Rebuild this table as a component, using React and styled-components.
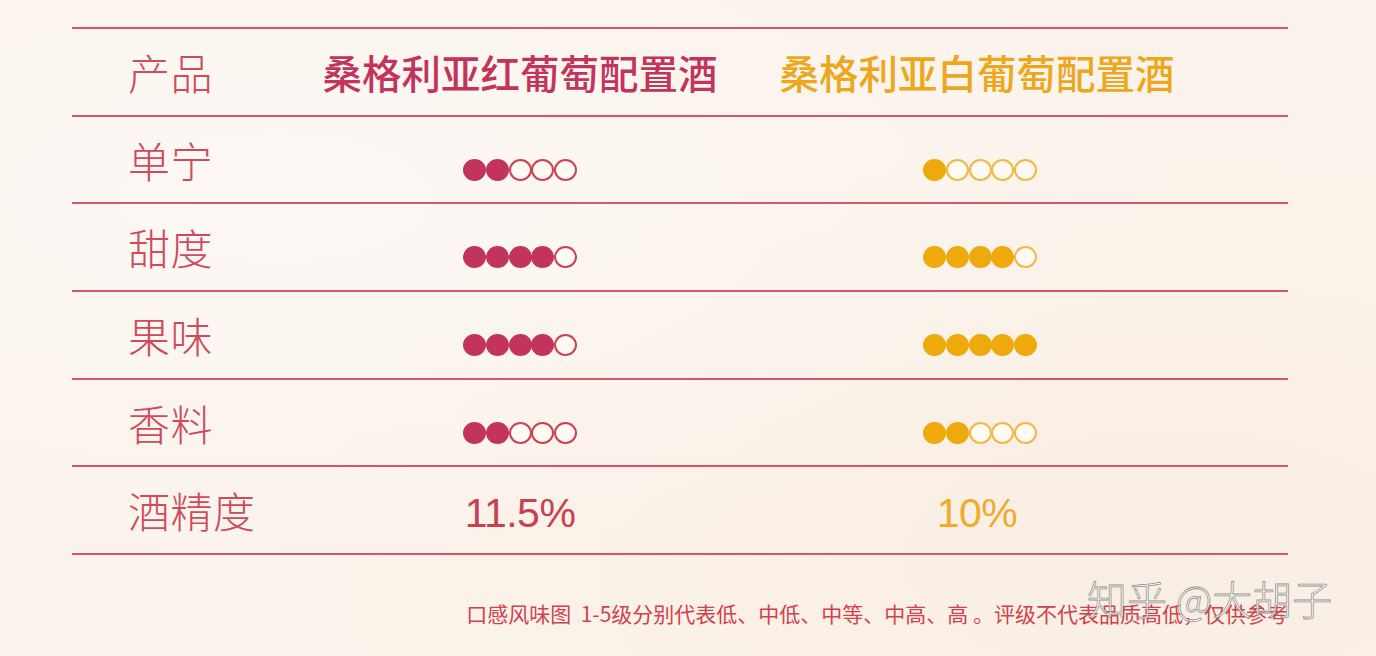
import React from "react";
import styled, { createGlobalStyle } from "styled-components";

const GlobalStyle = createGlobalStyle`
  html, body {
    margin: 0;
    padding: 0;
    background: #fbf3eb;
  }
  body {
    font-family: "Noto Sans CJK SC", "Noto Sans", sans-serif;
  }
`;

const RED = "#c3345c";
const GOLD = "#eea90c";
const LINE = "#d65566";

const Page = styled.div`
  position: relative;
  width: 1376px;
  height: 656px;
  box-sizing: border-box;
  padding: 27px 88px 0 72px;
  background:
    radial-gradient(ellipse at 20% 30%, rgba(255, 255, 255, 0.45), transparent 60%),
    radial-gradient(ellipse at 85% 85%, rgba(246, 230, 214, 0.4), transparent 55%),
    #fbf3eb;
  overflow: hidden;
`;

const Table = styled.div`
  display: flex;
  flex-direction: column;
  width: 1216px;
  border-bottom: 2px solid ${LINE};
`;

const Row = styled.div`
  display: grid;
  grid-template-columns: 250px 396px 518px 1fr;
  align-items: center;
  height: 87.7px;
  box-sizing: border-box;
  border-top: 2px solid ${LINE};
`;

const Label = styled.div`
  padding-left: 56px;
  font-size: 42px;
  line-height: 1;
  font-weight: 300;
  color: #cf4a5c;
  letter-spacing: 0.5px;
`;

const Heading = styled.div`
  text-align: center;
  font-size: 39.5px;
  line-height: 1;
  font-weight: 500;
  color: ${(p) => (p.$tone === "gold" ? "#eda71c" : RED)};
  white-space: nowrap;
`;

const DotCell = styled.div`
  display: flex;
  justify-content: center;
  padding-top: 20px;
  padding-left: ${(p) => (p.$tone === "gold" ? 6 : 0)}px;
`;

const Dot = styled.span`
  display: block;
  width: 23px;
  height: 22px;
  box-sizing: border-box;
  border-radius: 50%;
  margin-left: ${(p) => (p.$first ? 0 : -0.3)}px;
  background: ${(p) =>
    p.$filled ? (p.$tone === "gold" ? GOLD : RED) : "#fffaf4"};
  border: 2px solid
    ${(p) =>
      p.$filled
        ? p.$tone === "gold"
          ? GOLD
          : RED
        : p.$tone === "gold"
        ? "#f0b845"
        : "#cc4252"};
`;

const Value = styled.div`
  text-align: center;
  padding-top: 6px;
  font-family: "Liberation Sans", "DejaVu Sans", sans-serif;
  font-size: 41px;
  line-height: 1;
  font-weight: 300;
  letter-spacing: -0.5px;
  color: ${(p) => (p.$tone === "gold" ? "#efac2c" : "#c94150")};
`;

const Note = styled.div`
  align-self: flex-end;
  width: 1216px;
  margin-top: 48px;
  text-align: right;
  font-size: 21px;
  line-height: 1;
  color: #d0424f;
  white-space: pre;
`;

const Watermark = styled.div`
  position: absolute;
  left: 1087px;
  top: 578px;
  font-size: 40px;
  line-height: 1;
  font-weight: 300;
  color: rgba(255, 255, 255, 0.7);
  -webkit-text-stroke: 0.8px rgba(100, 100, 100, 0.7);
  white-space: pre;
`;

const rows = [
  { label: "单宁", red: 2, gold: 1 },
  { label: "甜度", red: 4, gold: 4 },
  { label: "果味", red: 4, gold: 5 },
  { label: "香料", red: 2, gold: 2 },
];

function Rating({ value, tone }) {
  return (
    <DotCell $tone={tone}>
      {[0, 1, 2, 3, 4].map((i) => (
        <Dot key={i} $first={i === 0} $filled={i < value} $tone={tone} />
      ))}
    </DotCell>
  );
}

export default function App() {
  return (
    <Page>
      <GlobalStyle />
      <Table>
        <Row>
          <Label>产品</Label>
          <Heading>桑格利亚红葡萄配置酒</Heading>
          <Heading $tone="gold">桑格利亚白葡萄配置酒</Heading>
        </Row>
        {rows.map((r) => (
          <Row key={r.label}>
            <Label>{r.label}</Label>
            <Rating value={r.red} tone="red" />
            <Rating value={r.gold} tone="gold" />
          </Row>
        ))}
        <Row>
          <Label>酒精度</Label>
          <Value>11.5%</Value>
          <Value $tone="gold">10%</Value>
        </Row>
      </Table>
      <Note>口感风味图  1-5级分别代表低、中低、中等、中高、高 。评级不代表品质高低，仅供参考</Note>
      <Watermark>知乎 @大胡子</Watermark>
    </Page>
  );
}
